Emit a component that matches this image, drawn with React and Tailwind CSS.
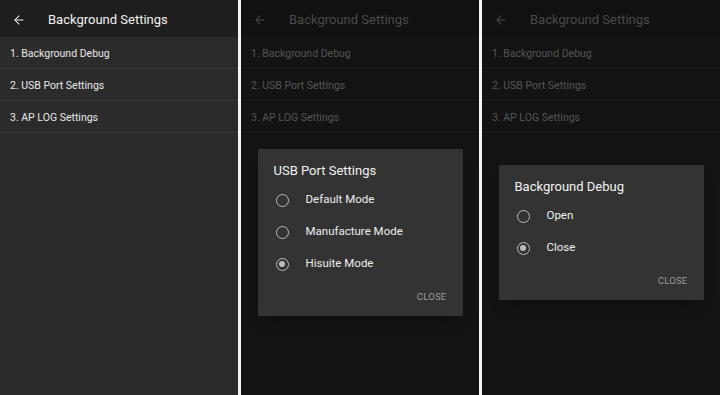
import { ArrowLeft } from "lucide-react";

const items = ["1. Background Debug", "2. USB Port Settings", "3. AP LOG Settings"];

function Screen({ dim, children }) {
  return (
    <div className={`relative w-[238px] h-full flex flex-col ${dim ? "bg-[#131313]" : "bg-[#2b2b2b]"}`}>
      <div className={`h-[37px] pt-[2px] flex items-center shrink-0 ${dim ? "bg-[#111111] text-[#4a4a4a]" : "bg-[#1e1e1e] text-[#f2f2f2]"}`}>
        <ArrowLeft className="ml-[12px] w-[14px] h-[14px]" strokeWidth={1.75} />
        <span className="ml-[22px] text-[13px]">Background Settings</span>
      </div>
      {items.map((t) => (
        <div
          key={t}
          className={`h-[32px] pt-[2px] flex items-center pl-[10px] text-[10.5px] border-b ${
            dim ? "border-[#191919] text-[#555555]" : "border-[#3a3a3a] text-[#e8e8e8]"
          }`}
        >
          {t}
        </div>
      ))}
      {children && (
        <div className="absolute inset-0 pt-[70px] flex items-center justify-center">{children}</div>
      )}
    </div>
  );
}

function Radio({ checked, label }) {
  return (
    <div className="h-[32px] pt-[2px] flex items-center">
      <div className="ml-[18px] w-[13px] h-[13px] rounded-full border-[1.5px] border-[#bdbdbd] flex items-center justify-center">
        {checked && <div className="w-[6px] h-[6px] rounded-full bg-[#bdbdbd]" />}
      </div>
      <span className="ml-[17px] text-[11.5px] text-[#eeeeee]">{label}</span>
    </div>
  );
}

function Dialog({ title, options, selected }) {
  return (
    <div className="w-[205px] bg-[#333333] shadow-lg">
      <div className="pt-[14px] pl-[16px] text-[13px] text-[#f2f2f2] leading-[16px]">{title}</div>
      <div className="mt-[4px]">
        {options.map((o) => (
          <Radio key={o} label={o} checked={o === selected} />
        ))}
      </div>
      <div className="flex justify-end pr-[16px] pt-[12px] pb-[13px] text-[9.5px] text-[#9a9a9a] tracking-wide leading-[12px]">
        CLOSE
      </div>
    </div>
  );
}

export default function App() {
  return (
    <div
      className="w-[720px] h-[395px] flex bg-[#f4f4f4] gap-[3px] overflow-hidden"
      style={{ fontFamily: "Roboto, 'Noto Sans', sans-serif" }}
    >
      <Screen />
      <Screen dim>
        <Dialog
          title="USB Port Settings"
          options={["Default Mode", "Manufacture Mode", "Hisuite Mode"]}
          selected="Hisuite Mode"
        />
      </Screen>
      <Screen dim>
        <Dialog title="Background Debug" options={["Open", "Close"]} selected="Close" />
      </Screen>
    </div>
  );
}
